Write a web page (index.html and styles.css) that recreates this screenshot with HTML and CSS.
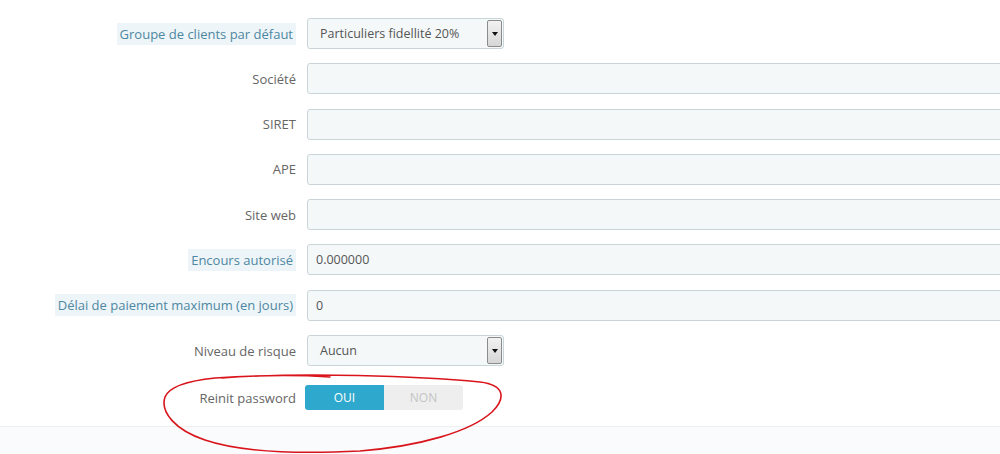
FILE: index.html
```html
<!DOCTYPE html>
<html lang="fr">
<head>
    <meta charset="UTF-8">
    <title>Client</title>
    <link rel="stylesheet" href="styles.css">
</head>
<body>
    <div class="panel">
        <div class="form">
            <div class="row">
                <label class="label"><span class="hint">Groupe de clients par défaut</span></label>
                <div class="select">
                    <span class="select-text">Particuliers fidellité 20%</span>
                    <span class="select-btn"><span class="caret"></span></span>
                </div>
            </div>
            <div class="row">
                <label class="label">Société</label>
                <div class="input"></div>
            </div>
            <div class="row">
                <label class="label">SIRET</label>
                <div class="input"></div>
            </div>
            <div class="row">
                <label class="label">APE</label>
                <div class="input"></div>
            </div>
            <div class="row">
                <label class="label">Site web</label>
                <div class="input"></div>
            </div>
            <div class="row">
                <label class="label"><span class="hint">Encours autorisé</span></label>
                <div class="input">0.000000</div>
            </div>
            <div class="row">
                <label class="label"><span class="hint">Délai de paiement maximum (en jours)</span></label>
                <div class="input">0</div>
            </div>
            <div class="row">
                <label class="label">Niveau de risque</label>
                <div class="select">
                    <span class="select-text">Aucun</span>
                    <span class="select-btn"><span class="caret"></span></span>
                </div>
            </div>
            <div class="row row-switch">
                <label class="label">Reinit password</label>
                <div class="switch">
                    <span class="switch-on">OUI</span>
                    <span class="switch-off">NON</span>
                </div>
            </div>
        </div>
        <div class="footer"></div>

        <!-- hand drawn circle around the new option -->
        <svg class="scribble" width="1000" height="454" viewBox="0 0 1000 454">
            <path d="M 222 378 C 300 372, 420 376, 480 382 C 505 385, 506 398, 492 412 C 470 432, 420 446, 360 451 C 300 454, 240 452, 205 440 C 175 430, 160 412, 165 397 C 170 385, 195 380, 215 378 C 260 375, 300 375, 330 377"
                  fill="none" stroke="#d9141b" stroke-width="1.6" stroke-linecap="round"/>
        </svg>
    </div>
</body>
</html>
```

FILE: styles.css
```css
body {
    margin: 0;
    font-family: "Open Sans", Arial, sans-serif;
    font-size: 13px;
    color: #666;
    background: #fff;
}

.panel {
    position: relative;
    height: 454px;
    overflow: hidden;
}

.form {
    padding-top: 18px;
    display: flex;
    flex-direction: column;
    gap: 14.3px;
}

.row {
    display: flex;
    align-items: center;
    height: 31px;
}

.row-switch {
    margin-top: 5px;
    height: 25px;
}

.label {
    width: 307px;
    padding-right: 11px;
    text-align: right;
    box-sizing: border-box;
    flex-shrink: 0;
}

.hint {
    background: #eef5f9;
    color: #4d87a1;
    padding: 2px 3px;
}

.input {
    flex: 1;
    height: 31px;
    margin-right: -20px;
    box-sizing: border-box;
    border: 1px solid #c9d5d8;
    border-radius: 3px;
    background: #f4f8f9;
    color: #555;
    padding: 0 8px;
    line-height: 29px;
    font-size: 12.5px;
}

.select {
    width: 197px;
    height: 31px;
    box-sizing: border-box;
    border: 1px solid #c9d5d8;
    border-radius: 3px;
    background: #f4f8f9;
    color: #555;
    display: flex;
    align-items: center;
    padding-left: 12px;
    padding-right: 1px;
    font-size: 12.5px;
}

.select-text {
    flex: 1;
}

.select-btn {
    width: 15px;
    height: 27px;
    box-sizing: border-box;
    border: 1px solid #8b8b8b;
    border-radius: 2px;
    background: linear-gradient(#f2f2f2, #d6d6d6);
    display: flex;
    align-items: center;
    justify-content: center;
}

.caret {
    width: 0;
    height: 0;
    border-left: 3.5px solid transparent;
    border-right: 3.5px solid transparent;
    border-top: 4px solid #111;
}

.switch {
    display: flex;
    width: 158px;
    height: 25px;
    border-radius: 3px;
    overflow: hidden;
    margin-left: -2px;
    text-align: center;
    line-height: 25px;
    font-size: 12px;
}

.switch-on {
    flex: 1;
    background: #2ea8cc;
    color: #fff;
}

.switch-off {
    flex: 1;
    background: #eeeeee;
    color: #c4c4c4;
}

.footer {
    margin-top: 16px;
    height: 40px;
    border-top: 1px solid #eef0f2;
    background: #fafbfc;
}

.scribble {
    position: absolute;
    left: 0;
    top: 0;
    pointer-events: none;
}
```
